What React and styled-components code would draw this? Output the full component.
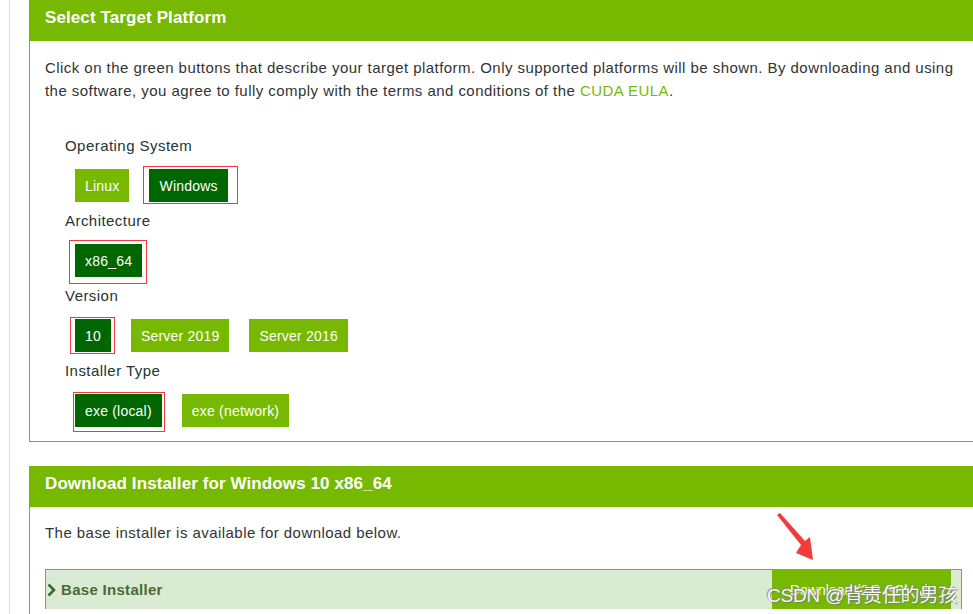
import React from 'react';
import styled, { createGlobalStyle } from 'styled-components';
import { Download } from 'lucide-react';

const GlobalStyle = createGlobalStyle`
  html, body {
    margin: 0;
    padding: 0;
    overflow: hidden;
    background: #fff;
  }
  body {
    font-family: "Liberation Sans", Arial, sans-serif;
    color: #333;
  }
`;

const Page = styled.div`
  margin-left: 9px;
  border-left: 1px solid #ddd;
  padding-left: 19px;
  width: 960px;
  min-height: 614px;
`;

const Panel = styled.section`
  border: 1px solid #76b900;
  border-top: none;
  margin-bottom: 24px;
`;

const PanelHeader = styled.h2`
  margin: 0;
  height: 41px;
  box-sizing: border-box;
  display: flex;
  align-items: center;
  padding: 0 15px 5px;
  background: #76b900;
  color: #fff;
  font-size: 17px;
  font-weight: 700;
  letter-spacing: 0.1px;
`;

const PanelBody = styled.div`
  padding: ${({ $pad }) => $pad || '15px'};
`;

const Intro = styled.p`
  margin: 0;
  font-size: 15px;
  line-height: 23px;
  letter-spacing: 0.45px;
`;

const Link = styled.a`
  color: #76b900;
  text-decoration: none;
`;

const Selector = styled.div`
  margin-top: 33px;
  padding-left: 20px;
  display: flex;
  flex-direction: column;
  gap: 8px;
`;

const Group = styled.div`
  display: flex;
  flex-direction: column;
  gap: 12px;
`;

const GroupLabel = styled.div`
  font-size: 15px;
  line-height: 22px;
  letter-spacing: 0.45px;
  color: #243434;
`;

const ButtonRow = styled.div`
  display: flex;
  gap: 20px;
  padding-left: 10px;
`;

const OptionButton = styled.button`
  height: 33px;
  padding: 0 10px;
  border: none;
  border-radius: 0;
  background: ${({ $active }) => ($active ? '#006600' : '#76b900')};
  color: #fff;
  font-family: inherit;
  font-size: 14px;
  letter-spacing: 0.2px;
  cursor: pointer;
`;

const Marked = styled.span`
  position: relative;
  display: inline-flex;

  &::after {
    content: '';
    position: absolute;
    top: ${({ $t }) => -$t}px;
    right: ${({ $r }) => -$r}px;
    bottom: ${({ $b }) => -$b}px;
    left: ${({ $l }) => -$l}px;
    border: 1px solid #ee3a3a;
    pointer-events: none;
  }
`;

const InstallerRow = styled.div`
  position: relative;
  margin-top: 25px;
  height: 39px;
  border: 1px solid #76b900;
  border-bottom: none;
  background: #d9ecd3;
  display: flex;
  align-items: stretch;
  justify-content: space-between;
  width: 915px;
`;

const RowTitle = styled.div`
  display: flex;
  align-items: center;
  gap: 5px;
  padding-left: 1px;
  font-size: 15px;
  font-weight: 700;
  letter-spacing: 0.3px;
  color: #4b6a33;
`;

const DownloadButton = styled.button`
  margin-right: 10px;
  width: 179px;
  border: none;
  background: #76b900;
  color: #fff;
  font-family: inherit;
  font-size: 14px;
  display: flex;
  align-items: center;
  justify-content: center;
  gap: 10px;
`;

const Watermark = styled.span`
  position: absolute;
  right: 4px;
  top: 10px;
  font-family: "Liberation Sans", "Noto Sans CJK SC", sans-serif;
  font-size: 19px;
  letter-spacing: -0.2px;
  color: #fff;
  text-shadow: 1px 1px 1px #777, -1px -1px 1px #888;
  opacity: 0.9;
  pointer-events: none;
  white-space: nowrap;
`;

const Arrow = styled.svg`
  position: absolute;
  left: 728px;
  top: -60px;
`;

const groups = [
  {
    label: 'Operating System',
    options: [
      { name: 'Linux' },
      { name: 'Windows', active: true, box: [3, 10, 2, 6] },
    ],
  },
  {
    label: 'Architecture',
    options: [{ name: 'x86_64', active: true, box: [4, 5, 7, 6] }],
  },
  {
    label: 'Version',
    options: [
      { name: '10', active: true, box: [2, 4, 2, 5] },
      { name: 'Server 2019' },
      { name: 'Server 2016' },
    ],
  },
  {
    label: 'Installer Type',
    options: [
      { name: 'exe (local)', active: true, box: [2, 3, 5, 2] },
      { name: 'exe (network)' },
    ],
  },
];

function Option({ option }) {
  const button = <OptionButton $active={option.active}>{option.name}</OptionButton>;
  if (!option.box) return button;
  const [t, r, b, l] = option.box;
  return (
    <Marked $t={t} $r={r} $b={b} $l={l}>
      {button}
    </Marked>
  );
}

export default function App() {
  return (
    <>
      <GlobalStyle />
      <Page>
        <Panel>
          <PanelHeader>Select Target Platform</PanelHeader>
          <PanelBody $pad="15px 15px 14px">
            <Intro>
              Click on the green buttons that describe your target platform. Only supported platforms will be shown. By downloading and using
              the software, you agree to fully comply with the terms and conditions of the <Link href="#">CUDA EULA</Link>.
            </Intro>
            <Selector>
              {groups.map((group) => (
                <Group key={group.label}>
                  <GroupLabel>{group.label}</GroupLabel>
                  <ButtonRow>
                    {group.options.map((option) => (
                      <Option key={option.name} option={option} />
                    ))}
                  </ButtonRow>
                </Group>
              ))}
            </Selector>
          </PanelBody>
        </Panel>

        <Panel>
          <PanelHeader>Download Installer for Windows 10 x86_64</PanelHeader>
          <PanelBody $pad="14px 15px 15px">
            <Intro>The base installer is available for download below.</Intro>
            <InstallerRow>
              <RowTitle>
                <svg width="9" height="14" viewBox="0 0 9 14">
                  <path d="M1.5 1.5 L7 7 L1.5 12.5" fill="none" stroke="#3b6a2a" strokeWidth="2.6" />
                </svg>
                Base Installer
              </RowTitle>
              <DownloadButton>
                Download (2.9 GB)
                <Download size={14} strokeWidth={2.5} />
              </DownloadButton>
              <Watermark>CSDN @背责任的男孩</Watermark>
              <Arrow width="50" height="55" viewBox="0 0 50 55">
                <polygon points="3,5 6,3 31,31 36,27 39,50 22,43 27,35" fill="#f23c3c" />
              </Arrow>
            </InstallerRow>
          </PanelBody>
        </Panel>
      </Page>
    </>
  );
}
